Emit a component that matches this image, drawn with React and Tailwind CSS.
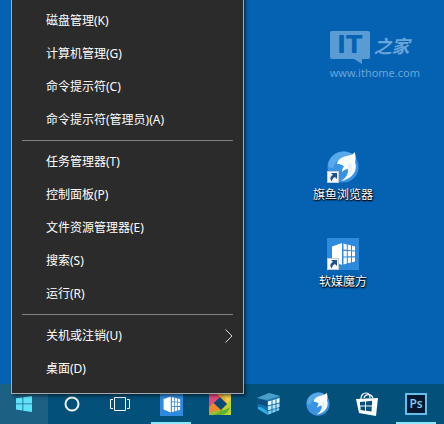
import React from "react";

const menuGroups = [
  ["磁盘管理(K)", "计算机管理(G)", "命令提示符(C)", "命令提示符(管理员)(A)"],
  ["任务管理器(T)", "控制面板(P)", "文件资源管理器(E)", "搜索(S)", "运行(R)"],
  ["关机或注销(U)", "桌面(D)"],
];

function FishIcon({ className }) {
  return (
    <svg viewBox="0 0 32 32" className={className} aria-hidden="true">
      <circle cx="16" cy="16" r="15.5" fill="#3a93e2" />
      <path d="M1 15C2 6 9 .5 17 .5c4 0 7 1.500 9 3.500C17 5 9 8 6 17c-2 0-4-.5-5-2z" fill="#58a8ea" />
      <path
        d="M10 13c1-5 5-7 9-8 4-1 7-1 8.500-4 1.500 4 1.500 7 .5 10 3 8-2 17-14 19 5-3 7.500-7 7-12-2 0-4 1-6 3 0-3 1-4 2-5.500-2-2-4.500-2.500-7-2.500z"
        fill="#f7fbff"
      />
      <path d="M21 14c2 4 2 8-1 12 5-4 6-8 4-13z" fill="#e3f1fc" />
    </svg>
  );
}

function CubeTileIcon({ className }) {
  return (
    <svg viewBox="0 0 32 32" className={className} aria-hidden="true">
      <rect width="32" height="32" fill="#2f8ade" />
      <path d="M5 8.500L15 5v22L5 23z" fill="#fff" />
      <path d="M16.500 5.500l3.300.9v5.400l-3.300-.3zM20.800 6.600l3.200.9v4.700l-3.200-.3zM25 7.800l3 .8v4l-3-.3z" fill="#fff" />
      <path d="M16.500 12.700l3.300.2v5.500h-3.300zM20.800 13l3.200.2v5h-3.200zM25 13.300l3 .2v4.700h-3z" fill="#fff" />
      <path d="M16.500 19.600h3.300v6l-3.300.9zM20.800 19.500H24v5l-3.200.8zM25 19.400h3v4l-3 .8z" fill="#fff" />
    </svg>
  );
}

function ShortcutArrow() {
  return (
    <svg viewBox="0 0 12 12" className="absolute bottom-0 left-0 size-3" aria-hidden="true">
      <rect x=".5" y=".5" width="11" height="11" fill="#f5f8fb" stroke="#c5ced8" />
      <path d="M4 2h6v6L8 6C6 7 5 8 5 10.500 2.500 8 3 5.500 6 4z" fill="#1e4f91" />
    </svg>
  );
}

function WindowsIcon() {
  return (
    <svg viewBox="0 0 16 16" className="size-4" fill="#5fe3f8" aria-hidden="true">
      <path d="M0 2.300l6.500-.9v6.100H0zM7.300 1.300L16 0v7.500H7.300zM0 8.300h6.500v6.200L0 13.600zM7.300 8.300H16V16l-8.700-1.300z" />
    </svg>
  );
}

function CortanaIcon() {
  return (
    <svg viewBox="0 0 16 16" className="size-4" aria-hidden="true">
      <circle cx="8" cy="8" r="6.500" fill="none" stroke="#f2f8fb" strokeWidth="2" />
    </svg>
  );
}

function TaskViewIcon() {
  return (
    <svg viewBox="0 0 20 16" className="h-4 w-5" fill="none" stroke="#f2f8fb" aria-hidden="true">
      <path d="M4.500 1.500h11v13h-11zM3 3.500H.5v9H3M17 3.500h2.500v9H17" />
    </svg>
  );
}

function PinwheelIcon() {
  return (
    <svg viewBox="0 0 22 22" className="size-[22px]" aria-hidden="true">
      <rect width="22" height="22" rx="1" fill="#f0a02c" />
      <path d="M0 0h10L11 4 4 10 0 17z" fill="#e8457d" />
      <path d="M7 0h15v8l-4 3-7-7z" fill="#f5b53a" />
      <path d="M12 0h10v6l-4 5c0-5-2-8-6-11z" fill="#f3d34e" />
      <path d="M22 5v17h-8l-2-5 6-6z" fill="#b9d431" />
      <path d="M21 14c-1 5-5 8-10 8H2c4-1 7-2 10-5 3 1 6-1 9-3z" fill="#5fb331" />
      <path d="M0 14l4.500-4 7.500 7c-4 3-8 3-12 5z" fill="#ee8a2d" />
      <path d="M0 22c2-4 7-4 12-5-3 4-7 5-12 5z" fill="#94c435" />
      <path d="M11 4l7 7-6 6-7.500-7z" fill="#084a74" />
    </svg>
  );
}

function GlassCubeIcon() {
  return (
    <svg viewBox="0 0 24 24" className="size-6" aria-hidden="true">
      <path d="M0 6l12-5 11 3-1 14-11 5L1 17z" fill="#1b74ac" />
      <path d="M0 6l10 3 1 14L1 17z" fill="#1471ad" />
      <path d="M0 6l10 3v6C7 13 3 12 .5 12z" fill="#0d4c80" />
      <path d="M1 15c4 0 7 2 9.500 5l.5 3L1 17z" fill="#31aee4" />
      <path d="M0 6l12-5 11 3-13 4z" fill="#4a9fc8" />
      <path d="M11 9.500l3.500-1v4l-3.500.8zM15.500 8.200l3-.9v4.200l-3 .7zM19.500 7l3-.9v4.400l-3 .7z" fill="#e4f8ff" />
      <path d="M11 14.300l3.500-.8v3.800l-3.500 1zM15.500 13.200l3-.7v3.700l-3 .9zM19.500 12.200l3-.7v3.400l-3 1z" fill="#b7e5f7" />
      <path d="M11.300 19.300l3.200-1v3l-3.200 1.200zM15.500 18l3-.9v2.700l-3 1.200zM19.500 16.800l2.700-.8v2.200l-2.700 1.200z" fill="#86cfec" />
    </svg>
  );
}

function StoreIcon() {
  return (
    <svg viewBox="0 0 22 24" className="h-6 w-[22px]" aria-hidden="true">
      <path d="M5 7C5 3 7 1 10 1s4 2 4 5M8 6c1-4 7-5 9 0" fill="none" stroke="#fff" strokeWidth="1.200" />
      <path d="M0 7l22-1-2 18L3 21z" fill="#fff" />
      <path d="M4 10l5-.5v4H4zM10 9.400l6-.6v4.700h-6zM4.400 14.500H9v4.200l-4.300-.6zM10 14.500h5.800l-.3 5.100-5.500-.8z" fill="#075179" />
    </svg>
  );
}

function PhotoshopIcon() {
  return (
    <span className="flex size-[22px] items-center justify-center border-2 border-[#63bfe6] bg-[#06172f] font-['Open_Sans',sans-serif] text-xs leading-none font-semibold text-[#78d2f5]">
      Ps
    </span>
  );
}

const pinnedApps = [
  { name: "软媒魔方", icon: <CubeTileIcon className="size-[23px]" />, open: true },
  { name: "Pinwheel", icon: <PinwheelIcon /> },
  { name: "Cube", icon: <GlassCubeIcon /> },
  { name: "旗鱼浏览器", icon: <FishIcon className="size-6" /> },
  { name: "Store", icon: <StoreIcon /> },
  { name: "Photoshop", icon: <PhotoshopIcon />, open: true },
];

function DesktopShortcut({ label, children }) {
  return (
    <button className="flex w-20 flex-col items-center gap-1 text-xs leading-4 text-white [text-shadow:1px_1px_2px_#000,0_1px_1px_#000]">
      <span className="relative size-8">
        {children}
        <ShortcutArrow />
      </span>
      {label}
    </button>
  );
}

function Watermark() {
  return (
    <div className="flex flex-col text-[#69a5d8]">
      <div className="flex items-center gap-1">
        <div className="relative flex h-7 w-10 items-center justify-center rounded-xs bg-[#5b9bd3] font-['DejaVu_Sans',sans-serif] text-2xl leading-7 font-bold text-[#0562b3]">
          IT
          <svg viewBox="0 0 8 5" className="absolute top-full right-2 h-[5px] w-2" aria-hidden="true">
            <path d="M0 0h8v5z" fill="#5b9bd3" />
          </svg>
        </div>
        <span className="font-['Noto_Sans_CJK_SC',sans-serif] text-lg leading-7 font-bold italic">之家</span>
      </div>
      <span className="mt-1 text-[11px] leading-5">www.ithome.com</span>
    </div>
  );
}

function ContextMenu() {
  return (
    <nav className="absolute bottom-[30px] left-[11px] w-[233px] border border-[#a3a9ad] bg-[#2b2b2b] pt-8 pb-2 shadow-[2px_2px_3px_rgba(0,0,0,0.5)]">
      {menuGroups.map((group, index) => (
        <React.Fragment key={group[0]}>
          {index > 0 && <hr className="mx-[10px] my-1 border-t border-[#808080]" />}
          {group.map((item) => (
            <button
              key={item}
              className="flex h-[33px] w-full items-center justify-between pr-[10px] pl-[34px] text-xs leading-4 text-white"
            >
              {item}
              {item === "关机或注销(U)" && (
                <svg viewBox="0 0 9 14" className="h-[14px] w-[9px]" fill="none" stroke="#d8d8d8" aria-hidden="true">
                  <path d="M1.500 .5L8 7l-6.500 6.500" />
                </svg>
              )}
            </button>
          ))}
        </React.Fragment>
      ))}
    </nav>
  );
}

function Taskbar() {
  return (
    <footer className="flex h-10 bg-[#03507a]">
      <button aria-label="Start" className="flex w-12 items-center justify-center bg-[#1c6084]">
        <WindowsIcon />
      </button>
      <button aria-label="Cortana" className="flex w-12 items-center justify-center">
        <CortanaIcon />
      </button>
      <button aria-label="Task view" className="flex w-12 items-center justify-center">
        <TaskViewIcon />
      </button>
      <div className="ml-[3px] flex gap-px">
        {pinnedApps.map((app) => (
          <button key={app.name} aria-label={app.name} className="relative flex w-12 items-center justify-center">
            {app.icon}
            {app.open && <span className="absolute inset-x-1 bottom-0 h-0.5 bg-[#8be9fb]" />}
          </button>
        ))}
      </div>
    </footer>
  );
}

export default function App() {
  return (
    <div className="relative flex min-h-screen flex-col overflow-hidden bg-[#0562b3] font-['Noto_Sans','Noto_Sans_CJK_SC',sans-serif]">
      <main className="relative flex-1">
        <div className="absolute top-[31px] right-6">
          <Watermark />
        </div>
        <div className="absolute top-[151px] right-[61px] flex flex-col gap-[35px]">
          <DesktopShortcut label="旗鱼浏览器">
            <FishIcon className="size-8" />
          </DesktopShortcut>
          <DesktopShortcut label="软媒魔方">
            <CubeTileIcon className="size-8" />
          </DesktopShortcut>
        </div>
      </main>
      <Taskbar />
      <ContextMenu />
    </div>
  );
}
